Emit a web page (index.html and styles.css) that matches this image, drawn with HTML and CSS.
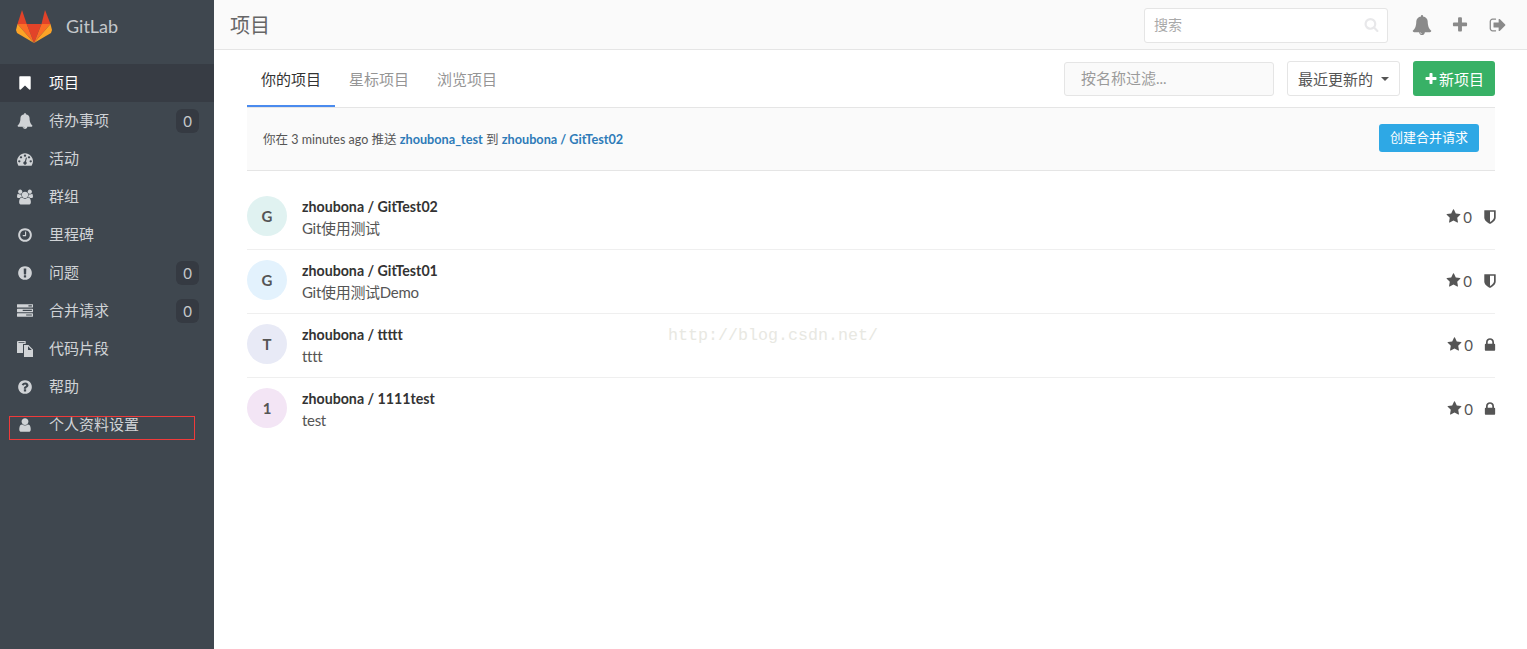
FILE: index.html
```html
<!DOCTYPE html>
<html lang="zh">
<head>
<meta charset="utf-8">
<title>项目 GitLab</title>
<link rel="stylesheet" href="styles.css">
</head>
<body>
<svg class="defs" width="0" height="0">
<defs>
<symbol id="i-bookmark" viewBox="0 0 1792 1792"><path d="M1420 128q23 0 44 9 33 13 52.500 41t19.500 62v1289q0 34-19.500 62t-52.500 41q-19 8-44 8-48 0-83-32l-441-424-441 424q-36 33-83 33-23 0-44-9-33-13-52.500-41t-19.500-62v-1289q0-34 19.500-62t52.500-41q21-9 44-9h1048z"/></symbol>
<symbol id="i-bell" viewBox="0 0 1792 1792"><path d="M912 1696q0-16-16-16-59 0-101.500-42.500t-42.500-101.500q0-16-16-16t-16 16q0 73 51.500 124.500t124.500 51.500q16 0 16-16zm816-288q0 52-38 90t-90 38h-448q0 106-75 181t-181 75-181-75-75-181h-448q-52 0-90-38t-38-90q50-42 91-88t85-119.500 74.500-158.500 50-206 19.500-260q0-152 117-282.500t307-158.500q-8-19-8-39 0-40 28-68t68-28 68 28 28 68q0 20-8 39 190 28 307 158.500t117 282.500q0 139 19.500 260t50 206 74.500 158.500 85 119.500 91 88z"/></symbol>
<symbol id="i-dash" viewBox="0 0 1792 1792"><path d="M384 1152q0-53-37.500-90.500t-90.500-37.500-90.500 37.500-37.500 90.500 37.500 90.500 90.500 37.500 90.500-37.500 37.500-90.500zm192-448q0-53-37.500-90.500t-90.500-37.500-90.500 37.500-37.500 90.500 37.500 90.500 90.500 37.500 90.500-37.500 37.500-90.500zm428 481l101-382q6-26-7.500-48.500t-38.500-29.500-48 6.500-30 39.500l-101 382q-60 5-107 43.500t-63 98.500q-20 77 20 146t117 89 146-20 89-117q16-60-6-117t-72-91zm660-33q0-53-37.500-90.500t-90.500-37.500-90.500 37.500-37.500 90.500 37.500 90.500 90.500 37.500 90.500-37.500 37.500-90.500zm-640-640q0-53-37.500-90.500t-90.500-37.500-90.500 37.500-37.500 90.500 37.500 90.500 90.500 37.500 90.500-37.500 37.500-90.500zm448 192q0-53-37.500-90.500t-90.500-37.500-90.500 37.500-37.500 90.500 37.500 90.500 90.500 37.500 90.500-37.500 37.500-90.500zm320 448q0 261-141 483-19 29-54 29h-1402q-35 0-54-29-141-221-141-483 0-182 71-348t191-286 286-191 348-71 348 71 286 191 191 286 71 348z"/></symbol>
<symbol id="i-users" viewBox="0 0 1920 1792"><path d="M593 896q-162 5-265 128h-134q-82 0-138-40.500t-56-118.500q0-353 124-353 6 0 43.500 21t97.500 42.500 119 21.500q67 0 133-23-5 37-5 66 0 139 81 256zm1071 637q0 120-73 189.500t-194 69.500h-874q-121 0-194-69.500t-73-189.500q0-53 3.500-103.500t14-109 26.500-108.500 43-97.500 62-81 85.500-53.500 111.500-20q10 0 43 21.500t73 48 107 48 135 21.500 135-21.500 107-48 73-48 43-21.500q61 0 111.500 20t85.500 53.500 62 81 43 97.500 26.500 108.500 14 109 3.500 103.500zm-1024-1277q0 106-75 181t-181 75-181-75-75-181 75-181 181-75 181 75 75 181zm704 384q0 159-112.500 271.500t-271.500 112.500-271.500-112.500-112.500-271.500 112.500-271.500 271.500-112.500 271.500 112.500 112.500 271.500zm576 225q0 78-56 118.500t-138 40.500h-134q-103-123-265-128 81-117 81-256 0-29-5-66 66 23 133 23 59 0 119-21.500t97.500-42.500 43.500-21q124 0 124 353zm-128-609q0 106-75 181t-181 75-181-75-75-181 75-181 181-75 181 75 75 181z"/></symbol>
<symbol id="i-clock" viewBox="0 0 1792 1792"><path d="M1024 544v448q0 14-9 23t-23 9h-320q-14 0-23-9t-9-23v-64q0-14 9-23t23-9h224v-352q0-14 9-23t23-9h64q14 0 23 9t9 23zm416 352q0-148-73-273t-198-198-273-73-273 73-198 198-73 273 73 273 198 198 273 73 273-73 198-198 73-273zm224 0q0 209-103 385.500t-279.500 279.500-385.500 103-385.500-103-279.500-279.500-103-385.500 103-385.500 279.500-279.500 385.500-103 385.500 103 279.500 279.500 103 385.500z"/></symbol>
<symbol id="i-excl" viewBox="0 0 1792 1792"><path d="M896 128q209 0 385.500 103t279.500 279.500 103 385.500-103 385.500-279.500 279.500-385.500 103-385.500-103-279.500-279.500-103-385.500 103-385.500 279.500-279.500 385.500-103zm128 1247v-190q0-14-9-23.500t-22-9.500h-192q-13 0-23 10t-10 23v190q0 13 10 23t23 10h192q13 0 22-9.500t9-23.500zm-2-344l18-621q0-12-10-18-10-8-24-8h-220q-14 0-24 8-10 6-10 18l17 621q0 10 10 17.500t24 7.500h185q14 0 23.500-7.500t10.500-17.500z"/></symbol>
<symbol id="i-tasks" viewBox="0 0 1792 1792"><path d="M1024 1408h640v-128h-640v128zm-384-512h1024v-128h-1024v128zm640-512h384v-128h-384v128zm512 832v256q0 26-19 45t-45 19h-1664q-26 0-45-19t-19-45v-256q0-26 19-45t45-19h1664q26 0 45 19t19 45zm0-512v256q0 26-19 45t-45 19h-1664q-26 0-45-19t-19-45v-256q0-26 19-45t45-19h1664q26 0 45 19t19 45zm0-512v256q0 26-19 45t-45 19h-1664q-26 0-45-19t-19-45v-256q0-26 19-45t45-19h1664q26 0 45 19t19 45z"/></symbol>
<symbol id="i-files" viewBox="0 0 16 16"><path fill-rule="evenodd" d="M.7 0h8v3H6v9H0V.7zM1.500 1.200v.8h6v-.8z"/><path fill-rule="evenodd" d="M7 4h4.500L16 8.500V16H7zM11 5.200V9h3.800z"/></symbol>
<symbol id="i-help" viewBox="0 0 1792 1792"><path d="M1024 1376v-192q0-14-9-23t-23-9h-192q-14 0-23 9t-9 23v192q0 14 9 23t23 9h192q14 0 23-9t9-23zm256-672q0-88-55.500-163t-138.500-116-170-41q-243 0-371 213-15 24 8 42l132 100q7 6 19 6 16 0 25-12 53-68 86-92 34-24 86-24 48 0 85.500 26t37.500 59q0 38-20 61t-68 45q-63 28-115.500 86.500t-52.500 125.500v36q0 14 9 23t23 9h192q14 0 23-9t9-23q0-19 21.500-49.500t54.500-49.500q32-18 49-28.500t46-35 44.500-48 28-60.500 12.500-81zm384 192q0 209-103 385.500t-279.500 279.500-385.500 103-385.500-103-279.500-279.500-103-385.500 103-385.500 279.500-279.500 385.500-103 385.500 103 279.500 279.500 103 385.500z"/></symbol>
<symbol id="i-user" viewBox="0 0 1792 1792"><path d="M1536 1399q0 109-62.500 187t-150.500 78h-854q-88 0-150.500-78t-62.500-187q0-85 8.500-160.500t31.500-152 58.500-131 94-89 134.500-34.500q131 128 313 128t313-128q76 0 134.500 34.500t94 89 58.500 131 31.500 152 8.500 160.500zm-256-887q0 159-112.500 271.500t-271.500 112.500-271.500-112.500-112.500-271.500 112.500-271.500 271.500-112.500 271.500 112.500 112.500 271.500z"/></symbol>
<symbol id="i-search" viewBox="0 0 1792 1792"><path d="M1216 832q0-185-131.500-316.500t-316.500-131.500-316.500 131.500-131.500 316.500 131.500 316.500 316.500 131.500 316.500-131.500 131.500-316.500zm512 832q0 52-38 90t-90 38q-54 0-90-38l-343-342q-179 124-399 124-143 0-273.500-55.500t-225-150-150-225-55.500-273.500 55.500-273.500 150-225 225-150 273.500-55.500 273.500 55.500 225 150 150 225 55.500 273.500q0 220-124 399l343 343q37 37 37 90z"/></symbol>
<symbol id="i-plus" viewBox="0 0 1792 1792"><path d="M1600 736v192q0 40-28 68t-68 28h-416v416q0 40-28 68t-68 28h-192q-40 0-68-28t-28-68v-416h-416q-40 0-68-28t-28-68v-192q0-40 28-68t68-28h416v-416q0-40 28-68t68-28h192q40 0 68 28t28 68v416h416q40 0 68 28t28 68z"/></symbol>
<symbol id="i-signout" viewBox="0 0 1792 1792"><path d="M704 1440q0 4 1 20t.5 26.500-3 23.500-10 19.500-20.500 6.500h-320q-119 0-203.500-84.500t-84.500-203.500v-704q0-119 84.500-203.500t203.500-84.500h320q13 0 22.500 9.500t9.500 22.500q0 4 1 20t.5 26.500-3 23.500-10 19.500-20.500 6.500h-320q-66 0-113 47t-47 113v704q0 66 47 113t113 47h312l11.500 1 11.500 3 8 5.500 7 9 2 13.500zm928-544q0 26-19 45l-544 544q-19 19-45 19t-45-19-19-45v-288h-448q-26 0-45-19t-19-45v-384q0-26 19-45t45-19h448v-288q0-26 19-45t45-19 45 19l544 544q19 19 19 45z"/></symbol>
<symbol id="i-star" viewBox="0 0 1792 1792"><path d="M1728 647q0 22-26 48l-363 354 86 500q1 7 1 20 0 21-10.500 35.500t-30.500 14.500q-19 0-40-12l-449-236-449 236q-22 12-40 12-21 0-31.500-14.500t-10.500-35.500q0-6 2-20l86-500-364-354q-25-27-25-48 0-37 56-46l502-73 225-455q19-41 49-41t49 41l225 455 502 73q56 9 56 46z"/></symbol>
<symbol id="i-shield" viewBox="0 0 1792 1792"><path d="M1344 960v-640h-448v1137q119-63 213-137 235-184 235-360zm192-768v768q0 86-33.500 170.500t-83 150-118 127.500-126.500 103-121 77.500-89.500 49.500-42.500 20q-12 6-26 6t-26-6q-16-7-42.500-20t-89.500-49.500-121-77.500-126.500-103-118-127.500-83-150-33.500-170.500v-768q0-26 19-45t45-19h1152q26 0 45 19t19 45z"/></symbol>
<symbol id="i-lock" viewBox="0 0 1792 1792"><path d="M640 768h512v-192q0-106-75-181t-181-75-181 75-75 181v192zm832 96v576q0 40-28 68t-68 28h-960q-40 0-68-28t-28-68v-576q0-40 28-68t68-28h32v-192q0-184 132-316t316-132 316 132 132 316v192h32q40 0 68 28t28 68z"/></symbol>
</defs>
</svg>
<div class="app">
  <aside class="sidebar">
    <a class="brand" href="#">
      <svg class="logo" viewBox="0 0 36 33" width="36" height="33">
        <polygon fill="#e24329" points="10.700,14 25.500,14 18,33"/>
        <polygon fill="#fc6d26" points="1.500,14 10.700,14 18,33"/>
        <polygon fill="#fc6d26" points="25.500,14 34.500,14 18,33"/>
        <polygon fill="#e24329" points="6,0 1.500,14 10.700,14"/>
        <polygon fill="#e24329" points="29,0 25.500,14 34.500,14"/>
        <polygon fill="#fca326" points="1.500,14 0,20 1,23 18,33"/>
        <polygon fill="#fca326" points="34.500,14 36,20 35,23 18,33"/>
      </svg>
      <span class="brand-name">GitLab</span>
    </a>
    <nav class="side-nav">
      <a class="side-item active" href="#"><svg class="side-icon"><use href="#i-bookmark"/></svg><span class="side-label">项目</span></a>
      <a class="side-item" href="#"><svg class="side-icon"><use href="#i-bell"/></svg><span class="side-label">待办事项</span><span class="count">0</span></a>
      <a class="side-item" href="#"><svg class="side-icon"><use href="#i-dash"/></svg><span class="side-label">活动</span></a>
      <a class="side-item" href="#"><svg class="side-icon"><use href="#i-users"/></svg><span class="side-label">群组</span></a>
      <a class="side-item" href="#"><svg class="side-icon"><use href="#i-clock"/></svg><span class="side-label">里程碑</span></a>
      <a class="side-item" href="#"><svg class="side-icon"><use href="#i-excl"/></svg><span class="side-label">问题</span><span class="count">0</span></a>
      <a class="side-item" href="#"><svg class="side-icon"><use href="#i-tasks"/></svg><span class="side-label">合并请求</span><span class="count">0</span></a>
      <a class="side-item" href="#"><svg class="side-icon"><use href="#i-files"/></svg><span class="side-label">代码片段</span></a>
      <a class="side-item" href="#"><svg class="side-icon"><use href="#i-help"/></svg><span class="side-label">帮助</span></a>
      <a class="side-item" href="#"><svg class="side-icon"><use href="#i-user"/></svg><span class="side-label">个人资料设置</span></a>
    </nav>
    <div class="red-mark"></div>
  </aside>
  <div class="main">
    <header class="topbar">
      <h1 class="page-title">项目</h1>
      <div class="search">
        <span class="search-ph">搜索</span>
        <svg class="search-icon"><use href="#i-search"/></svg>
      </div>
      <svg class="top-icon bell"><use href="#i-bell"/></svg>
      <svg class="top-icon plus"><use href="#i-plus"/></svg>
      <svg class="top-icon signout"><use href="#i-signout"/></svg>
    </header>
    <section class="content">
      <div class="nav-row">
        <ul class="tabs">
          <li class="tab active">你的项目</li>
          <li class="tab">星标项目</li>
          <li class="tab">浏览项目</li>
        </ul>
        <div class="controls">
          <div class="filter">按名称过滤...</div>
          <div class="sort">最近更新的<span class="caret"></span></div>
          <div class="new-btn"><svg class="new-icon"><use href="#i-plus"/></svg>新项目</div>
        </div>
      </div>
      <div class="push-bar">
        <p class="push-text">你在 3 minutes ago 推送 <a href="#">zhoubona_test</a> 到 <a href="#">zhoubona / GitTest02</a></p>
        <div class="mr-btn">创建合并请求</div>
      </div>
      <ul class="projects">
        <li class="project">
          <div class="avatar a-teal">G</div>
          <div class="info"><div class="name">zhoubona / GitTest02</div><div class="desc">Git使用测试</div></div>
          <div class="stats"><svg class="star"><use href="#i-star"/></svg><span class="stars">0</span><svg class="vis"><use href="#i-shield"/></svg></div>
        </li>
        <li class="project">
          <div class="avatar a-blue">G</div>
          <div class="info"><div class="name">zhoubona / GitTest01</div><div class="desc">Git使用测试Demo</div></div>
          <div class="stats"><svg class="star"><use href="#i-star"/></svg><span class="stars">0</span><svg class="vis"><use href="#i-shield"/></svg></div>
        </li>
        <li class="project">
          <div class="avatar a-indigo">T</div>
          <div class="info"><div class="name">zhoubona / ttttt</div><div class="desc">tttt</div></div>
          <div class="stats"><svg class="star"><use href="#i-star"/></svg><span class="stars">0</span><svg class="vis vis-lock"><use href="#i-lock"/></svg></div>
        </li>
        <li class="project last">
          <div class="avatar a-purple">1</div>
          <div class="info"><div class="name">zhoubona / 1111test</div><div class="desc">test</div></div>
          <div class="stats"><svg class="star"><use href="#i-star"/></svg><span class="stars">0</span><svg class="vis vis-lock"><use href="#i-lock"/></svg></div>
        </li>
      </ul>
    </section>
  </div>
</div>
<div class="watermark">http://blog.csdn.net/</div>
</body>
</html>
```
FILE: styles.css
```css
* { box-sizing: border-box; }
html, body { margin: 0; padding: 0; height: 100%; overflow: hidden; }
body {
  font-family: Lato, "Noto Sans CJK SC", sans-serif;
  font-size: 14px;
  color: #555;
  background: #fff;
  position: relative;
}
a { text-decoration: none; color: inherit; }
ul { list-style: none; margin: 0; padding: 0; }
.defs { position: absolute; }
.app { display: flex; height: 649px; }

.sidebar { width: 214px; flex: none; background: #3f474f; position: relative; }
.brand { display: flex; align-items: center; height: 64px; padding: 0 0 12px 16px; }
.logo { display: block; margin-top: 1px; }
.brand-name { margin-left: 14px; font-size: 18px; color: #c3c7cb; }
.side-nav { display: flex; flex-direction: column; }
.side-item { display: flex; align-items: center; height: 38px; padding: 0 15px 0 17px; color: #d0d3d6; font-size: 15px; fill: #d0d3d6; }
.side-item.active { background: #373c44; color: #fff; fill: #fff; }
.side-icon { width: 16px; height: 16px; flex: none; }
.side-label { margin-left: 16px; margin-bottom: 4px; flex: 1; }
.count { width: 23px; height: 24px; border-radius: 6px; background: #353a42; color: #c5c8cb; font-size: 15px; line-height: 24px; text-align: center; }
.red-mark { position: absolute; left: 9px; top: 416px; width: 186px; height: 24px; border: 1px solid #f03a3a; }

.main { flex: 1; min-width: 0; }
.topbar { display: flex; align-items: center; height: 50px; padding: 0 0 0 16px; background: #fafafa; border-bottom: 1px solid #e5e5e5; }
.page-title { margin: 0; flex: 1; font-size: 20px; font-weight: 400; color: #666; }
.search { display: flex; align-items: center; justify-content: space-between; width: 244px; height: 35px; margin-top: 2px; padding: 0 8px 0 9px; background: #fff; border: 1px solid #e5e5e5; border-radius: 3px; }
.search-ph { margin-bottom: 4px; font-size: 14px; color: #a9a9a9; }
.search-icon { width: 15px; height: 15px; margin-bottom: 2px; fill: #e8e8ea; }
.top-icon { flex: none; fill: #8a8a8a; }
.bell { width: 20px; height: 20px; margin-left: 24px; }
.plus { width: 18px; height: 18px; margin-left: 19px; }
.signout { width: 18px; height: 18px; margin-left: 20px; margin-right: 20px; }

.content { padding: 0 32px 0 33px; }
.nav-row { display: flex; justify-content: space-between; height: 58px; border-bottom: 1px solid #e5e5e5; }
.tabs { display: flex; height: 57px; }
.tab { height: 57px; padding: 18px 14px 0; font-size: 15px; line-height: 22px; color: #959595; border-bottom: 2px solid transparent; }
.tab.active { color: #333; border-bottom-color: #4a8bee; }
.controls { display: flex; align-items: flex-start; padding-top: 11px; }
.filter { width: 210px; height: 34px; margin-top: 1px; padding-left: 16px; background: #fafafa; border: 1px solid #e5e5e5; border-radius: 3px; font-size: 15px; line-height: 31px; color: #9b9b9b; }
.sort { display: flex; align-items: center; width: 113px; height: 35px; margin-left: 13px; padding-left: 10px; background: #fff; border: 1px solid #e5e5e5; border-radius: 3px; font-size: 15px; color: #555; }
.caret { margin-left: 8px; margin-top: 1px; border-top: 4px solid #555; border-left: 4px solid transparent; border-right: 4px solid transparent; }
.new-btn { display: flex; align-items: center; justify-content: center; width: 82px; height: 35px; margin-left: 13px; background: #38b166; border-radius: 3px; font-size: 15px; color: #fff; }
.new-icon { width: 14px; height: 14px; margin-right: 1px; fill: #fff; }

.push-bar { display: flex; align-items: center; justify-content: space-between; height: 63px; padding: 0 16px 2px; background: #fafafa; border-bottom: 1px solid #e5e5e5; }
.push-text { margin: 0; font-size: 12.500px; color: #555; }
.push-text a { color: #2e7bb8; font-size: 12.700px; font-weight: 700; }
.mr-btn { width: 100px; height: 28px; background: #2ea8e5; border-radius: 3px; color: #fff; font-size: 13px; line-height: 27px; text-align: center; }

.projects { margin-top: 15px; }
.project { display: flex; height: 64px; padding-top: 10px; border-bottom: 1px solid #efefef; }
.project.last { border-bottom: 0; }
.avatar { flex: none; width: 40px; height: 40px; border-radius: 50%; font-size: 15px; font-weight: 700; line-height: 40px; text-align: center; color: #555; }
.a-teal { background: #e0f2f1; }
.a-blue { background: #e3f2fd; }
.a-indigo { background: #e8eaf6; }
.a-purple { background: #f3e5f5; }
.info { flex: 1; margin-left: 15px; padding-top: 1px; }
.name { font-size: 14.200px; font-weight: 700; line-height: 20px; color: #333; }
.desc { margin-top: 1px; font-size: 15px; line-height: 21px; letter-spacing: -0.3px; color: #555; }
.stats { display: flex; align-items: flex-start; height: 30px; margin-right: -3px; padding-top: 13px; fill: #555; }
.star { width: 15px; height: 15px; }
.stars { margin-top: 1px; margin-left: 2px; font-size: 15px; line-height: 15px; color: #555; }
.vis { width: 16px; height: 16px; margin-left: 10px; }
.vis-lock { margin-left: 9px; }

.watermark { position: absolute; left: 668px; top: 326px; font-family: "Liberation Mono", monospace; font-size: 16.67px; line-height: 20px; color: #e8e8e2; }
```
